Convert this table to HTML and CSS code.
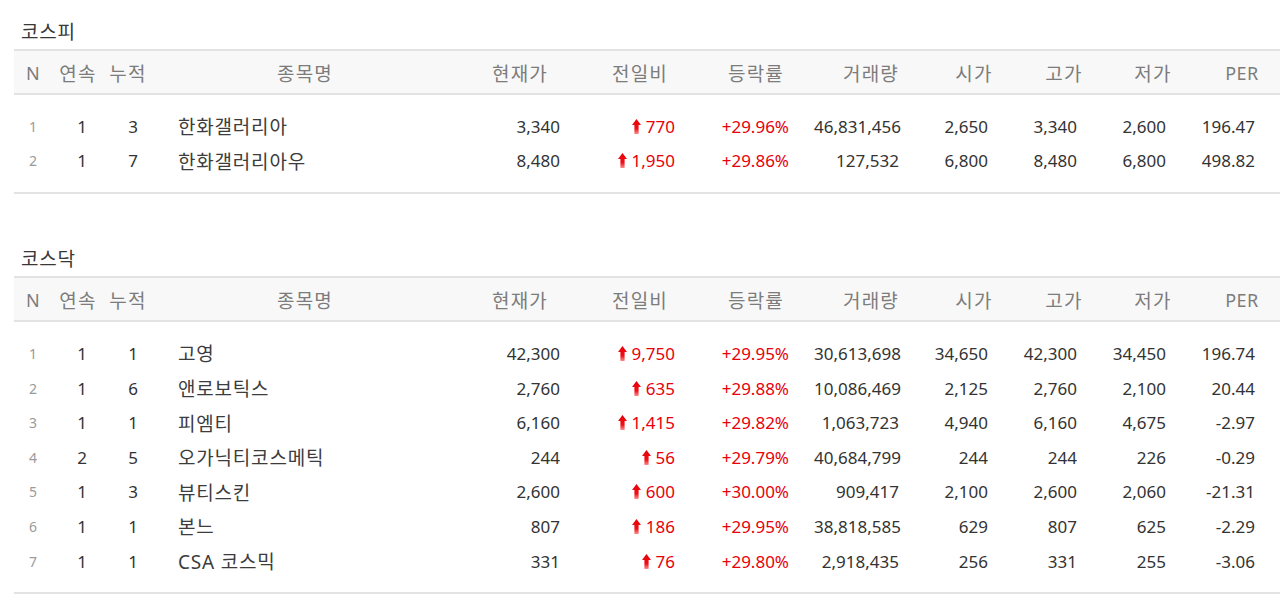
FILE: index.html
```html
<!DOCTYPE html>
<html lang="ko">
<head>
<meta charset="utf-8">
<title>상한가</title>
<link rel="stylesheet" href="styles.css">
</head>
<body>
<svg width="0" height="0" class="defs" aria-hidden="true">
  <defs>
    <linearGradient id="upg" x1="0" y1="0" x2="0" y2="1">
      <stop offset="0" stop-color="#e6000a"/>
      <stop offset="0.65" stop-color="#ee1016"/>
      <stop offset="1" stop-color="#ff8c8c"/>
    </linearGradient>
    <symbol id="up" viewBox="0 0 9 15">
      <path d="M4.5 0 L9 6 L6.6 6 L6.6 15 L2.4 15 L2.4 6 L0 6 Z" fill="url(#upg)"/>
    </symbol>
  </defs>
</svg>

<main class="page">
<section class="market">
  <h2 class="title">코스피</h2>
  <div class="frame">
  <div class="board">
    <div class="head">
      <span class="lat">N</span><span>연속</span><span>누적</span><span>종목명</span><span>현재가</span><span>전일비</span><span>등락률</span><span>거래량</span><span>시가</span><span>고가</span><span>저가</span><span class="lat">PER</span>
    </div>
    <div class="body">
      <div class="row"><span class="n">1</span><span class="c1">1</span><span class="c2">3</span><span class="name">한화갤러리아</span><span class="v p1">3,340</span><span class="v p2 up"><svg class="arrow"><use href="#up"/></svg>770</span><span class="v p3 up">+29.96%</span><span class="v p4">46,831,456</span><span class="v p5">2,650</span><span class="v p6">3,340</span><span class="v p7">2,600</span><span class="v p8">196.47</span></div>
      <div class="row"><span class="n">2</span><span class="c1">1</span><span class="c2">7</span><span class="name">한화갤러리아우</span><span class="v p1">8,480</span><span class="v p2 up"><svg class="arrow"><use href="#up"/></svg>1,950</span><span class="v p3 up">+29.86%</span><span class="v p4">127,532</span><span class="v p5">6,800</span><span class="v p6">8,480</span><span class="v p7">6,800</span><span class="v p8">498.82</span></div>
    </div>
  </div>
  </div>
</section>

<section class="market">
  <h2 class="title">코스닥</h2>
  <div class="frame">
  <div class="board">
    <div class="head">
      <span class="lat">N</span><span>연속</span><span>누적</span><span>종목명</span><span>현재가</span><span>전일비</span><span>등락률</span><span>거래량</span><span>시가</span><span>고가</span><span>저가</span><span class="lat">PER</span>
    </div>
    <div class="body">
      <div class="row"><span class="n">1</span><span class="c1">1</span><span class="c2">1</span><span class="name">고영</span><span class="v p1">42,300</span><span class="v p2 up"><svg class="arrow"><use href="#up"/></svg>9,750</span><span class="v p3 up">+29.95%</span><span class="v p4">30,613,698</span><span class="v p5">34,650</span><span class="v p6">42,300</span><span class="v p7">34,450</span><span class="v p8">196.74</span></div>
      <div class="row"><span class="n">2</span><span class="c1">1</span><span class="c2">6</span><span class="name">앤로보틱스</span><span class="v p1">2,760</span><span class="v p2 up"><svg class="arrow"><use href="#up"/></svg>635</span><span class="v p3 up">+29.88%</span><span class="v p4">10,086,469</span><span class="v p5">2,125</span><span class="v p6">2,760</span><span class="v p7">2,100</span><span class="v p8">20.44</span></div>
      <div class="row"><span class="n">3</span><span class="c1">1</span><span class="c2">1</span><span class="name">피엠티</span><span class="v p1">6,160</span><span class="v p2 up"><svg class="arrow"><use href="#up"/></svg>1,415</span><span class="v p3 up">+29.82%</span><span class="v p4">1,063,723</span><span class="v p5">4,940</span><span class="v p6">6,160</span><span class="v p7">4,675</span><span class="v p8">-2.97</span></div>
      <div class="row"><span class="n">4</span><span class="c1">2</span><span class="c2">5</span><span class="name">오가닉티코스메틱</span><span class="v p1">244</span><span class="v p2 up"><svg class="arrow"><use href="#up"/></svg>56</span><span class="v p3 up">+29.79%</span><span class="v p4">40,684,799</span><span class="v p5">244</span><span class="v p6">244</span><span class="v p7">226</span><span class="v p8">-0.29</span></div>
      <div class="row"><span class="n">5</span><span class="c1">1</span><span class="c2">3</span><span class="name">뷰티스킨</span><span class="v p1">2,600</span><span class="v p2 up"><svg class="arrow"><use href="#up"/></svg>600</span><span class="v p3 up">+30.00%</span><span class="v p4">909,417</span><span class="v p5">2,100</span><span class="v p6">2,600</span><span class="v p7">2,060</span><span class="v p8">-21.31</span></div>
      <div class="row"><span class="n">6</span><span class="c1">1</span><span class="c2">1</span><span class="name">본느</span><span class="v p1">807</span><span class="v p2 up"><svg class="arrow"><use href="#up"/></svg>186</span><span class="v p3 up">+29.95%</span><span class="v p4">38,818,585</span><span class="v p5">629</span><span class="v p6">807</span><span class="v p7">625</span><span class="v p8">-2.29</span></div>
      <div class="row"><span class="n">7</span><span class="c1">1</span><span class="c2">1</span><span class="name">CSA 코스믹</span><span class="v p1">331</span><span class="v p2 up"><svg class="arrow"><use href="#up"/></svg>76</span><span class="v p3 up">+29.80%</span><span class="v p4">2,918,435</span><span class="v p5">256</span><span class="v p6">331</span><span class="v p7">255</span><span class="v p8">-3.06</span></div>
    </div>
  </div>
  </div>
</section>
</main>
</body>
</html>
```

FILE: styles.css
```css
* { box-sizing: border-box; }

html, body {
  margin: 0;
  padding: 0;
  background: #ffffff;
  overflow: hidden;
}

body {
  font-family: "Noto Sans", "Noto Sans CJK KR", sans-serif;
  font-size: 17px;
  color: #333333;
}

.defs {
  position: absolute;
  width: 0;
  height: 0;
}

.page {
  display: flex;
  flex-direction: column;
  gap: 54px;
  padding: 21px 0 0 14px;
}

.title {
  margin: 0 0 6px 7px;
  font-size: 19px;
  font-weight: normal;
  line-height: 22px;
  letter-spacing: 0.8px;
  color: #383838;
}

.frame {
  overflow: hidden;
}

.board {
  width: 1272px;
  border-top: 2px solid #e3e3e3;
  border-bottom: 2px solid #e3e3e3;
}

.head,
.row {
  display: grid;
  grid-template-columns: 38px 52px 48px 306px 124px 116px 116px 114px 92px 88px 90px 88px;
  align-items: center;
}

.head {
  height: 44px;
  padding-top: 2px;
  background: #f8f8f8;
  border-bottom: 2px solid #e3e3e3;
  color: #7c7c7c;
  font-size: 19px;
  text-align: center;
  letter-spacing: 1.2px;
}

.head .lat {
  font-size: 18px;
  letter-spacing: 0.5px;
}

.body {
  padding: 14px 0 14px;
}

.row {
  height: 34.6px;
  white-space: nowrap;
}

.n {
  text-align: center;
  font-size: 14px;
  color: #9a9a9a;
}

.c1 {
  text-align: center;
  padding-left: 8px;
}

.c2 {
  text-align: center;
  padding-left: 10px;
}

.name {
  padding-left: 26px;
  font-size: 19px;
  letter-spacing: 0.8px;
  color: #3c3c3c;
}

.v {
  text-align: right;
}

.up {
  color: #e8000b;
}

.arrow {
  width: 9px;
  height: 15px;
  margin-right: 5px;
  vertical-align: -1px;
}

.p1 { padding-right: 22px; }
.p2 { padding-right: 23px; }
.p3 { padding-right: 25px; }
.p4 { padding-right: 29px; }
.p5 { padding-right: 32px; }
.p6 { padding-right: 31px; }
.p7 { padding-right: 32px; }
.p8 { padding-right: 31px; }
```
